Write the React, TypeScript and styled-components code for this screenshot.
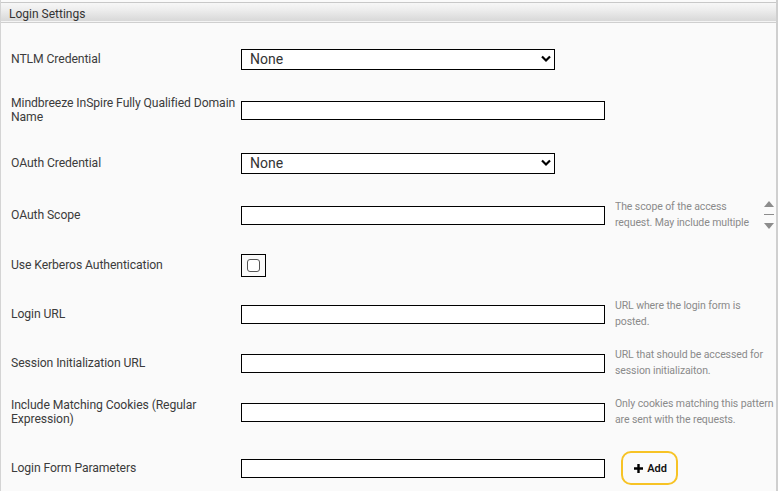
import React from "react";
import styled, { createGlobalStyle } from "styled-components";

const Global = createGlobalStyle`
  html, body { margin: 0; padding: 0; background: #ffffff; }
  body { font-family: Roboto, "Noto Sans", Arial, sans-serif; color: #333; }
  * { box-sizing: border-box; }
`;

const Panel = styled.section`
  width: 778px;
  height: 491px;
  border-left: 1px solid #d4d4d4;
  border-right: 2px solid #cfcfcf;
  background: #fafafa;
  overflow: hidden;
  display: flex;
  flex-direction: column;
`;

const Header = styled.div`
  height: 24px;
  margin-top: 2px;
  border-top: 1px solid #c8c8c8;
  border-bottom: 1px solid #cfcfcf;
  background: linear-gradient(#f7f7f7 0%, #ececec 40%, #d6d6d6 100%);
  box-shadow: inset 0 -1px 0 #f4f4f4;
  padding: 3px 0 0 8px;
  font-size: 12px;
  color: #333;
  line-height: 16px;
`;

const Body = styled.div`
  padding-top: 12px;
  display: flex;
  flex-direction: column;
`;

const Row = styled.div<{ $h: number }>`
  height: ${(p) => p.$h}px;
  display: grid;
  grid-template-columns: 230px 364px 166px;
  align-items: center;
  padding-left: 10px;
`;

const Label = styled.div`
  font-size: 12.2px;
  line-height: 14px;
  color: #3c3c3c;
  letter-spacing: -0.1px;
`;

const Field = styled.div<{ $w?: number }>`
  width: ${(p) => p.$w ?? 364}px;
  position: relative;
`;

const TextBox = styled.input`
  display: block;
  width: 100%;
  height: 19px;
  border: 1px solid #000;
  border-radius: 0;
  background: #fff;
  padding: 0 6px;
  font: 13px Roboto, sans-serif;
  outline: none;
`;

const Select = styled.select`
  display: block;
  width: 100%;
  height: 21px;
  border: 1px solid #000;
  border-radius: 0;
  background: #fff;
  padding: 0 8px;
  font: 14px Roboto, sans-serif;
  color: #333;
  appearance: none;
  -webkit-appearance: none;
  outline: none;
`;

const Chevron = styled.svg`
  position: absolute;
  right: 4px;
  top: 6px;
  width: 10px;
  height: 8px;
  pointer-events: none;
`;

const CheckFrame = styled.label`
  width: 25px;
  height: 23px;
  border: 1px solid #000;
  display: flex;
  align-items: center;
  justify-content: center;
  background: #fafafa;
`;

const CheckBox = styled.span`
  width: 13px;
  height: 13px;
  border: 1px solid #555;
  border-radius: 3px;
  background: #fff;
`;

const Help = styled.div<{ $clip?: boolean; $w?: number }>`
  margin-left: 10px;
  width: ${(p) => p.$w ?? 156}px;
  font-size: 10.5px;
  line-height: 16px;
  color: #8a8a8a;
  letter-spacing: -0.1px;
  position: relative;
  ${(p) => (p.$clip ? "max-height: 32px; overflow: hidden; padding-right: 22px; width: 160px;" : "")}
`;

const Scroller = styled.div`
  position: absolute;
  right: 0;
  top: 0;
  width: 12px;
  height: 32px;
  display: flex;
  flex-direction: column;
  align-items: center;
  justify-content: space-between;
  padding: 2px 0;
`;

const AddButton = styled.button`
  width: 57px;
  height: 34px;
  margin-left: 16px;
  border: 2px solid #f7c325;
  border-radius: 10px;
  background: #fafafa;
  display: flex;
  align-items: center;
  justify-content: center;
  gap: 4px;
  font: 600 11px Roboto, sans-serif;
  color: #111;
  padding: 0 0 0 2px;
`;

const ChevronIcon = () => (
  <Chevron viewBox="0 0 10 8">
    <path d="M1 1.5 L5 5.5 L9 1.5" stroke="#000" strokeWidth="2.2" fill="none" />
  </Chevron>
);

const App: React.FC = () => (
  <>
    <Global />
    <Panel>
      <Header>Login Settings</Header>
      <Body>
        <Row $h={48}>
          <Label>NTLM Credential</Label>
          <Field $w={314}>
            <Select defaultValue="none">
              <option value="none">None</option>
            </Select>
            <ChevronIcon />
          </Field>
        </Row>
        <Row $h={54}>
          <Label>Mindbreeze InSpire Fully Qualified Domain Name</Label>
          <Field>
            <TextBox />
          </Field>
        </Row>
        <Row $h={52}>
          <Label>OAuth Credential</Label>
          <Field $w={314}>
            <Select defaultValue="none">
              <option value="none">None</option>
            </Select>
            <ChevronIcon />
          </Field>
        </Row>
        <Row $h={52}>
          <Label>OAuth Scope</Label>
          <Field>
            <TextBox />
          </Field>
          <Help $clip>
            The scope of the access request. May include multiple values separated by spaces.
            <Scroller>
              <svg width="10" height="6" viewBox="0 0 10 6">
                <path d="M0 6 L5 0 L10 6 Z" fill="#8c8c8c" />
              </svg>
              <svg width="10" height="2" viewBox="0 0 10 2">
                <rect width="10" height="1" fill="#8c8c8c" />
              </svg>
              <svg width="10" height="6" viewBox="0 0 10 6">
                <path d="M0 0 L10 0 L5 6 Z" fill="#8c8c8c" />
              </svg>
            </Scroller>
          </Help>
        </Row>
        <Row $h={48}>
          <Label>Use Kerberos Authentication</Label>
          <CheckFrame>
            <CheckBox />
          </CheckFrame>
        </Row>
        <Row $h={50}>
          <Label>Login URL</Label>
          <Field>
            <TextBox />
          </Field>
          <Help>URL where the login form is posted.</Help>
        </Row>
        <Row $h={48}>
          <Label>Session Initialization URL</Label>
          <Field>
            <TextBox />
          </Field>
          <Help>URL that should be accessed for session initializaiton.</Help>
        </Row>
        <Row $h={50}>
          <Label>Include Matching Cookies (Regular Expression)</Label>
          <Field>
            <TextBox />
          </Field>
          <Help $w={164}>Only cookies matching this pattern are sent with the requests.</Help>
        </Row>
        <Row $h={62}>
          <Label>Login Form Parameters</Label>
          <Field>
            <TextBox />
          </Field>
          <div>
            <AddButton type="button">
              <svg width="9" height="9" viewBox="0 0 9 9">
                <path d="M4.5 0 V9 M0 4.5 H9" stroke="#000" strokeWidth="2.4" />
              </svg>
              Add
            </AddButton>
          </div>
        </Row>
      </Body>
    </Panel>
  </>
);

export default App;
